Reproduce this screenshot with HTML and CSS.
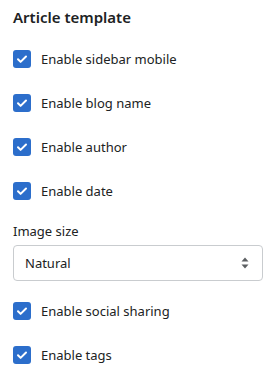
FILE: index.html
```html
<!DOCTYPE html>
<html lang="en">
<head>
  <meta charset="UTF-8">
  <meta name="viewport" content="width=device-width, initial-scale=1.0">
  <title>Article template</title>
  <link rel="stylesheet" href="styles.css">
</head>
<body>
  <div class="settings-panel">
    <h2>Article template</h2>

    <label class="checkbox-row">
      <span class="checkbox">
        <svg viewBox="0 0 18 18" width="18" height="18"><path d="M5 9.3l2.6 2.6 5.4-5.4" /></svg>
      </span>
      <span class="checkbox-label">Enable sidebar mobile</span>
    </label>
    <label class="checkbox-row">
      <span class="checkbox">
        <svg viewBox="0 0 18 18" width="18" height="18"><path d="M5 9.3l2.6 2.6 5.4-5.4" /></svg>
      </span>
      <span class="checkbox-label">Enable blog name</span>
    </label>
    <label class="checkbox-row">
      <span class="checkbox">
        <svg viewBox="0 0 18 18" width="18" height="18"><path d="M5 9.3l2.6 2.6 5.4-5.4" /></svg>
      </span>
      <span class="checkbox-label">Enable author</span>
    </label>
    <label class="checkbox-row">
      <span class="checkbox">
        <svg viewBox="0 0 18 18" width="18" height="18"><path d="M5 9.3l2.6 2.6 5.4-5.4" /></svg>
      </span>
      <span class="checkbox-label">Enable date</span>
    </label>

    <div class="field">
      <div class="field-label">Image size</div>
      <div class="select-wrap">
        <select class="select">
          <option>Natural</option>
          <option>Square</option>
          <option>Landscape</option>
        </select>
        <svg class="select-arrows" viewBox="0 0 10 14" width="10" height="14">
          <path d="M5 1.5l3.5 4h-7z" />
          <path d="M5 12.5l3.5-4h-7z" />
        </svg>
      </div>
    </div>

    <label class="checkbox-row">
      <span class="checkbox">
        <svg viewBox="0 0 18 18" width="18" height="18"><path d="M5 9.3l2.6 2.6 5.4-5.4" /></svg>
      </span>
      <span class="checkbox-label">Enable social sharing</span>
    </label>
    <label class="checkbox-row">
      <span class="checkbox">
        <svg viewBox="0 0 18 18" width="18" height="18"><path d="M5 9.3l2.6 2.6 5.4-5.4" /></svg>
      </span>
      <span class="checkbox-label">Enable tags</span>
    </label>
  </div>
</body>
</html>
```

FILE: styles.css
```css
body {
  font-family: 'Noto Sans', 'Open Sans', sans-serif;
  background-color: #ffffff;
  color: #202223;
  margin: 0;
  padding: 0;
}

.settings-panel {
  padding: 7px 10px 0 13px;
}

h2 {
  margin: 0 0 10px;
  font-size: 15px;
  line-height: 20px;
  font-weight: 600;
}

.checkbox-row {
  display: flex;
  align-items: center;
  height: 44px;
  cursor: pointer;
}

.checkbox {
  width: 18px;
  height: 18px;
  border-radius: 3px;
  background-color: #2c6ecb;
  flex-shrink: 0;
  display: flex;
}

.checkbox svg path {
  fill: none;
  stroke: #ffffff;
  stroke-width: 2;
  stroke-linecap: round;
  stroke-linejoin: round;
}

.checkbox-label {
  margin-left: 10px;
  font-size: 13px;
  line-height: 20px;
}

.field {
  margin-top: 8px;
  margin-bottom: 8px;
}

.field-label {
  font-size: 13px;
  line-height: 20px;
  margin-bottom: 4px;
}

.select-wrap {
  position: relative;
}

.select {
  appearance: none;
  -webkit-appearance: none;
  width: 100%;
  height: 36px;
  padding: 0 32px 0 11px;
  border: 1px solid #c9cccf;
  border-radius: 4px;
  background-color: #ffffff;
  color: #202223;
  font-family: inherit;
  font-size: 13px;
}

.select-arrows {
  position: absolute;
  right: 13px;
  top: 11px;
  pointer-events: none;
}

.select-arrows path {
  fill: #5c5f62;
}
```
